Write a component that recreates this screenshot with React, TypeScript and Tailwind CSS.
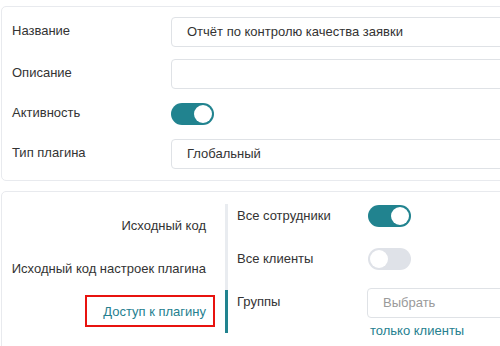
const Toggle = ({ on }: { on: boolean }) => (
    <div
        className={`w-[43px] h-[22px] rounded-full p-[2px] flex items-center ${
            on ? "bg-[#21838f] justify-end" : "bg-[#dfe2e8] justify-start"
        }`}
    >
        <div className="w-[18px] h-[18px] rounded-full bg-white" />
    </div>
);

const App = () => {
    const navItems = ["Исходный код", "Исходный код настроек плагина", "Доступ к плагину"];

    return (
        <div
            className="w-[500px] h-[346px] overflow-hidden bg-white text-[13px] text-[#333]"
            style={{ fontFamily: "'Liberation Sans', Arial, sans-serif" }}
        >
            {/* основная информация */}
            <div className="ml-[1px] mt-[6px] w-[540px] border border-[#e8eaee] rounded-[5px] pt-[10px] pb-[11px]">
                <div className="flex items-center h-[30px]">
                    <span className="w-[169px] pl-[10px] -mt-[3px]">Название</span>
                    <div className="flex-1 h-[30px] border border-[#dfe2e6] rounded-[4px] flex items-center pl-[15px]">
                        Отчёт по контролю качества заявки
                    </div>
                </div>
                <div className="flex items-center h-[30px] mt-[12px]">
                    <span className="w-[169px] pl-[10px] -mt-[3px]">Описание</span>
                    <div className="flex-1 h-[30px] border border-[#dfe2e6] rounded-[4px]" />
                </div>
                <div className="flex items-center h-[28px] mt-[11px]">
                    <span className="w-[169px] pl-[10px] -mt-[2px]">Активность</span>
                    <Toggle on />
                </div>
                <div className="flex items-center h-[30px] mt-[11px]">
                    <span className="w-[169px] pl-[10px] -mt-[3px]">Тип плагина</span>
                    <div className="flex-1 h-[30px] border border-[#dfe2e6] rounded-[4px] flex items-center pl-[15px]">
                        Глобальный
                    </div>
                </div>
            </div>

            {/* доступ */}
            <div className="ml-[1px] mt-[10px] w-[540px] h-[200px] border border-[#e8eaee] rounded-[5px] flex pt-[11px]">
                <div className="w-[226px] flex flex-col pt-[1px]">
                    {navItems.map((item, i) => (
                        <div
                            key={item}
                            className={`relative h-[43px] flex items-center justify-end pr-[19px] border-r-[3px] ${
                                i === 2 ? "border-[#21838f] text-[#25808f]" : "border-[#e9ecf0]"
                            }`}
                        >
                            {item}
                            {i === 2 && (
                                <div className="absolute left-[83px] top-[5px] w-[130px] h-[32px] border-2 border-[#e8130f]" />
                            )}
                        </div>
                    ))}
                </div>
                <div className="flex-1 pl-[9px] pt-[1px]">
                    <div className="flex items-center h-[24px]">
                        <span className="w-[131px] -mt-[1px]">Все сотрудники</span>
                        <Toggle on />
                    </div>
                    <div className="flex items-center h-[24px] mt-[19px]">
                        <span className="w-[131px] -mt-[1px]">Все клиенты</span>
                        <Toggle on={false} />
                    </div>
                    <div className="flex items-center h-[30px] mt-[17px]">
                        <span className="w-[130px] -mt-[3px]">Группы</span>
                        <div className="flex-1 h-[30px] border border-[#dfe2e6] rounded-[4px] flex items-center pl-[15px] text-[#9a9a9a]">
                            Выбрать
                        </div>
                    </div>
                    <div className="ml-[133px] mt-[3px] text-[#25808f]">только клиенты</div>
                </div>
            </div>
        </div>
    );
};

export default App;
